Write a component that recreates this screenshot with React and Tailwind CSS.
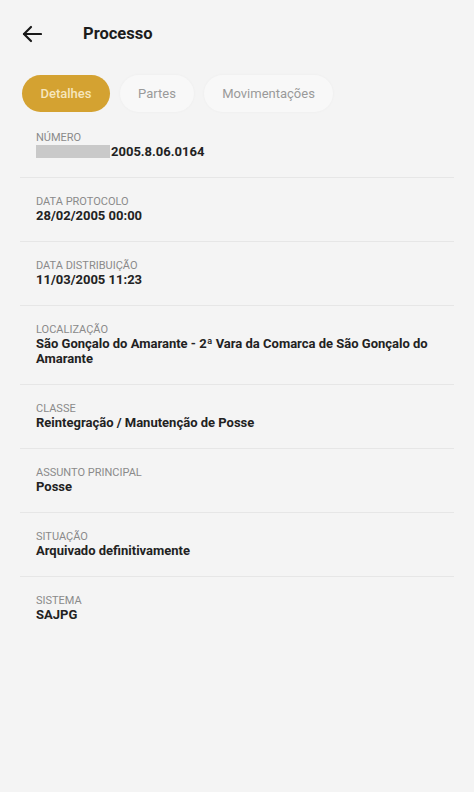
import React from "react";

const items = [
  { label: "NÚMERO", value: "2005.8.06.0164", redacted: true },
  { label: "DATA PROTOCOLO", value: "28/02/2005 00:00" },
  { label: "DATA DISTRIBUIÇÃO", value: "11/03/2005 11:23" },
  { label: "LOCALIZAÇÃO", value: "São Gonçalo do Amarante - 2ª Vara da Comarca de São Gonçalo do Amarante" },
  { label: "CLASSE", value: "Reintegração / Manutenção de Posse" },
  { label: "ASSUNTO PRINCIPAL", value: "Posse" },
  { label: "SITUAÇÃO", value: "Arquivado definitivamente" },
  { label: "SISTEMA", value: "SAJPG", last: true },
];

export default function App() {
  return (
    <div className="w-[474px] h-[792px] bg-[#f4f4f4] overflow-hidden" style={{ fontFamily: "Roboto, 'Liberation Sans', sans-serif" }}>
      <div className="flex items-center h-[34px] mt-[17px] pl-[22px]">
        <svg width="20" height="18" viewBox="0 0 20 18" fill="none" stroke="#1a1a1a" strokeWidth="2.2" strokeLinecap="round" strokeLinejoin="round">
          <path d="M19 9H2" />
          <path d="M9 2L2 9l7 7" />
        </svg>
        <span className="ml-[41px] text-[16.5px] font-bold text-[#1c1c1c]">Processo</span>
      </div>
      <div className="flex gap-[10px] pl-[22px] mt-[24px]">
        <div className="h-[37px] w-[88px] rounded-full bg-[#d4a231] flex items-center justify-center text-[13px] text-[#f6e6bd] font-medium">Detalhes</div>
        <div className="h-[37px] w-[74px] rounded-full bg-[#f8f8f8] shadow-[0_0_3px_rgba(0,0,0,0.04)] flex items-center justify-center text-[13px] text-[#9a9a9a]">Partes</div>
        <div className="h-[37px] w-[129px] rounded-full bg-[#f8f8f8] shadow-[0_0_3px_rgba(0,0,0,0.04)] flex items-center justify-center text-[13px] text-[#9a9a9a]">Movimentações</div>
      </div>
      <div className="mt-[2px] px-[20px]">
        {items.map((it) => (
          <div key={it.label} className={`pl-[16px] pt-[17px] pb-[18px] ${it.last ? "" : "border-b border-[#e6e6e6]"}`}>
            <div className="text-[11px] leading-[13px] text-[#8a8a8a]">{it.label}</div>
            <div className="text-[13px] leading-[15px] font-bold text-[#222] flex items-center">
              {it.redacted && <span className="inline-block w-[74px] h-[13px] bg-[#c9c9c9] mr-[1px]" />}
              <span>{it.value}</span>
            </div>
          </div>
        ))}
      </div>
    </div>
  );
}
